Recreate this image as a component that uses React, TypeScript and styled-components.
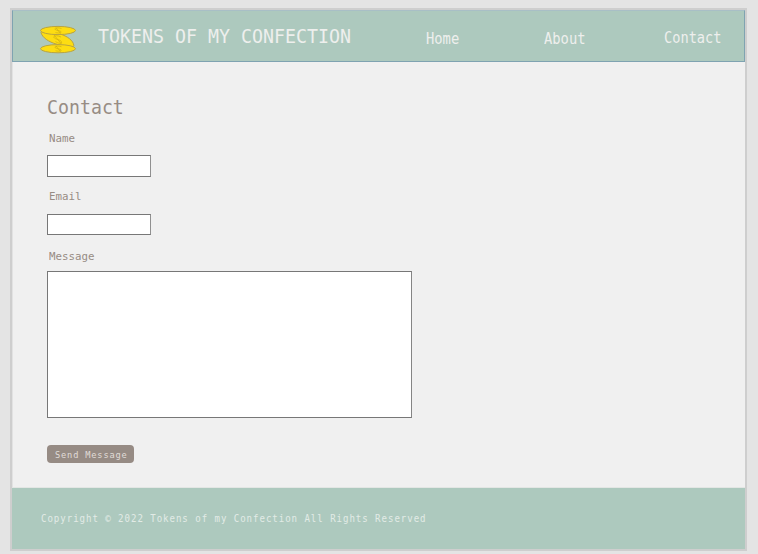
import React from 'react';
import styled, { createGlobalStyle } from 'styled-components';

const Global = createGlobalStyle`
  * { box-sizing: border-box; }
  body { margin: 0; background: #e4e4e4; font-family: "DejaVu Sans Mono", monospace; overflow: hidden; }
`;

const Page = styled.div`
  width: 758px;
  height: 554px;
  padding: 8px 11px 3px 10px;
`;

const Frame = styled.div`
  height: 543px;
  border: 2px solid #cecece;
  background: #f0f0f0;
  display: flex;
  flex-direction: column;
`;

const Header = styled.header`
  height: 52px;
  flex: none;
  background: #adc9be;
  border: 1px solid #7fa3b1;
  border-top-color: #a8bfc6;
  display: flex;
  align-items: flex-start;
`;

const Logo = styled.svg`
  width: 38px;
  height: 29px;
  margin: 14px 0 0 26px;
  flex: none;
`;

const Type = styled.span<{ $size: number; $line: number; $scale: number; $spacing?: number }>`
  display: block;
  width: max-content;
  font-size: ${p => p.$size}px;
  line-height: ${p => p.$line}px;
  letter-spacing: ${p => p.$spacing ?? 0}px;
  transform: scaleX(${p => p.$scale});
  transform-origin: left;
  white-space: pre;
`;

const Brand = styled.div`
  width: 328px;
  flex: none;
  margin: 12px 0 0 20.6px;
  color: #eeefed;
`;

const Nav = styled.nav`
  display: flex;
  color: #eeefed;
`;

const NavItem = styled.a<{ $width: number; $top: number }>`
  width: ${p => p.$width}px;
  flex: none;
  margin-top: ${p => p.$top}px;
`;

const Form = styled.form`
  flex: 1;
  padding: 34px 0 0 34px;
  border-left: 1px solid #e2e2e2;
  border-bottom: 1px solid #e3e6e4;
  color: #978c84;
`;

const Heading = styled.h1`
  margin: 0;
  height: 24px;
  font-weight: normal;
`;

const Label = styled.label<{ $top: number }>`
  display: block;
  height: 14px;
  margin: ${p => p.$top}px 0 0 2.4px;
`;

const Field = styled.input<{ $height: number }>`
  display: block;
  width: 104px;
  height: ${p => p.$height}px;
  margin-top: ${p => 31 - p.$height}px;
  border: 1px solid #777;
  border-right-color: #909090;
  border-radius: 0;
  background: #fff;
  outline: 0;
`;

const Message = styled.textarea`
  display: block;
  width: 365px;
  height: 147px;
  margin-top: 7px;
  border: 1px solid #777;
  border-right-color: #858585;
  background: #fff;
  resize: none;
  outline: 0;
`;

const Send = styled.button`
  display: block;
  width: 87px;
  height: 18px;
  margin-top: 27px;
  padding: 1px 0 0 8px;
  border: 0;
  border-radius: 4px;
  background: #968b84;
  color: #e0dcd8;
  font-family: inherit;
  text-align: left;
`;

const Footer = styled.footer`
  height: 61px;
  flex: none;
  padding: 24px 0 0 28.5px;
  background: #adc9be;
  color: #e2ebe6;
`;

const Coin = ({ transform }: { transform: string }) => (
  <g transform={transform}>
    <ellipse rx="17.5" ry="4.1" fill="#fddd12" stroke="#b9a440" strokeWidth="1" />
    <path d="M3.5-2C0-3.2-4-2.6-3-1.2S3 .2 3.2 1.4 0 2.8-2.5 2M-2-2.8 2.5 3" fill="none" stroke="#c7a812" strokeWidth="0.6" />
  </g>
);

export default function App() {
  return (
    <>
      <Global />
      <Page>
        <Frame>
          <Header>
            <Logo viewBox="0 0 38 29" aria-label="Stack of tokens">
              <path d="M2 7.5C3 12.5 10 17 17 19C23 21 34.5 24 34.8 20.5C34.5 15.5 28 11 21 9C13 6.5 2 4.5 2 7.5Z" fill="#fddd12" stroke="#b9a440" strokeWidth="1" />
              <path d="M22 12C18 10 14 10.5 15 12.5S22 14.5 22.5 17 18.5 18 16.5 16.5M15 10 22.5 19" fill="none" stroke="#c7a812" strokeWidth="0.6" />
              <Coin transform="translate(19 23.7)" />
              <Coin transform="translate(19 5.5)" />
            </Logo>
            <Brand><Type $size={20} $line={26} $scale={0.914}>TOKENS OF MY CONFECTION</Type></Brand>
            <Nav>
              <NavItem $width={118.6} $top={19}><Type $size={15} $line={18} $scale={0.92}>Home</Type></NavItem>
              <NavItem $width={120} $top={19}><Type $size={15} $line={18} $scale={0.92}>About</Type></NavItem>
              <NavItem $width={60} $top={18}><Type $size={15} $line={18} $scale={0.91}>Contact</Type></NavItem>
            </Nav>
          </Header>
          <Form>
            <Heading><Type $size={19.5} $line={24} $scale={0.935}>Contact</Type></Heading>
            <Label $top={12}><Type $size={11} $line={14} $scale={0.98}>Name</Type></Label>
            <Field $height={22} />
            <Label $top={13}><Type $size={11} $line={14} $scale={0.98}>Email</Type></Label>
            <Field $height={21} />
            <Label $top={15}><Type $size={11} $line={14} $scale={0.98}>Message</Type></Label>
            <Message />
            <Send type="button"><Type $size={9.5} $line={14} $scale={0.914} $spacing={0.9}>Send Message</Type></Send>
          </Form>
          <Footer><Type $size={10} $line={14} $scale={0.91} $spacing={1.04}>Copyright © 2022 Tokens of my Confection All Rights Reserved</Type></Footer>
        </Frame>
      </Page>
    </>
  );
}
